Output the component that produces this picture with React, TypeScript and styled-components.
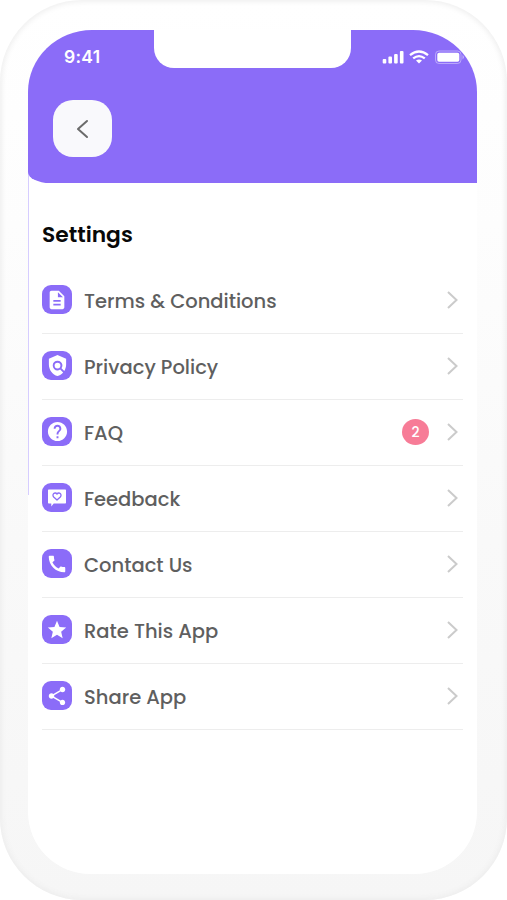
import React from "react";
import styled, { createGlobalStyle } from "styled-components";
import { MdCall, MdDescription, MdHelp, MdPolicy, MdShare, MdStar } from "react-icons/md";

const GlobalStyle = createGlobalStyle`
  * { box-sizing: border-box; }
  body { margin: 0; background: #fff; font-family: Poppins, Inter, sans-serif; }
`;

const Phone = styled.div`
  width: 507px;
  height: 900px;
  padding: 30px 30px 26px 28px;
  border-radius: 82px;
  background: linear-gradient(#fff 0%, #fdfdfd 25%, #f9f9f9 60%, #f6f6f6 100%);
  box-shadow: inset 0 0 6px 1px #ebebeb;
`;

const Screen = styled.main`
  position: relative;
  width: 449px;
  height: 844px;
  border-radius: 62px;
  background: #fff;
`;

const EdgeLine = styled.span`
  position: absolute;
  left: 0;
  top: 140px;
  width: 1px;
  height: 325px;
  background: #d6cdff;
`;

const Header = styled.header`
  position: relative;
  height: 153px;
  padding: 0 0 0 25px;
  background: #8b6cf8;
  border-radius: 64px 64px 0 22px / 62px 62px 0 11px;
`;

const Notch = styled.div`
  position: absolute;
  left: 126px;
  top: 0;
  width: 197px;
  height: 38px;
  border-radius: 0 0 20px 20px;
  background: #fff;
`;

const StatusBar = styled.div`
  display: flex;
  justify-content: space-between;
  height: 70px;
  padding: 17px 11px 0 11px;
  color: #fff;
`;

const Time = styled.span`
  font: 600 17.5px/20px Inter, sans-serif;
  letter-spacing: 0.3px;
`;

const StatusIcons = styled.svg`
  width: 84px;
  height: 20px;
`;

const BackButton = styled.button`
  display: flex;
  align-items: center;
  justify-content: center;
  width: 59px;
  height: 57px;
  padding: 0;
  border: 0;
  border-radius: 20px;
  background: #f9f9fc;
`;

const Content = styled.section`
  padding: 38px 14px 0;
`;

const Title = styled.h1`
  margin: 0;
  height: 47px;
  color: #080808;
  font-size: 21.8px;
  font-weight: 600;
  line-height: 27px;
`;

const List = styled.ul`
  margin: 0;
  padding: 0;
  list-style: none;
`;

const Row = styled.li`
  display: flex;
  align-items: center;
  height: 66px;
  padding: 0 5px 2px 0;
  border-bottom: 1px solid #ededed;
`;

const Tile = styled.span`
  display: flex;
  align-items: center;
  justify-content: center;
  width: 30px;
  height: 29px;
  margin-right: 12px;
  border-radius: 9px;
  background: #8b6cf8;
  color: #fff;
`;

const Label = styled.span`
  flex: 1;
  padding-top: 5px;
  color: #5f5f5f;
  font-size: 19.5px;
  font-weight: 500;
  line-height: 28px;
  white-space: nowrap;
`;

const Badge = styled.span`
  width: 27px;
  height: 26px;
  margin-right: 18px;
  border-radius: 50%;
  background: #f77c97;
  color: #fff;
  font-size: 14px;
  font-weight: 500;
  line-height: 26px;
  text-align: center;
`;

const FeedbackIcon = () => (
  <svg width="20" height="20" viewBox="0 0 20 20">
    <path d="M1.7 1.5h16.6a.7.7 0 0 1 .7.7v12.6a.7.7 0 0 1-.7.7H6.7l-2.4 3v-3H1.7a.7.7 0 0 1-.7-.7V2.2a.7.7 0 0 1 .7-.7Z" fill="#fff" />
    <path d="M10 12 6.7 9C4.4 6.4 8 3.4 10 6c2-2.6 5.6.4 3.3 3Z" fill="none" stroke="#8b6cf8" strokeWidth="1.3" strokeLinejoin="round" />
  </svg>
);

const Chevron = () => (
  <svg width="11" height="18" viewBox="0 0 11 18" fill="none" stroke="#cbcbcb" strokeWidth="2">
    <path d="m1 1 8.5 8L1 17" />
  </svg>
);

const items = [
  { label: "Terms & Conditions", icon: <MdDescription size={22} /> },
  { label: "Privacy Policy", icon: <MdPolicy size={23} /> },
  { label: "FAQ", icon: <MdHelp size={23} />, count: 2 },
  { label: "Feedback", icon: <FeedbackIcon /> },
  { label: "Contact Us", icon: <MdCall size={22} /> },
  { label: "Rate This App", icon: <MdStar size={22} /> },
  { label: "Share App", icon: <MdShare size={22} /> },
];

export default function App() {
  return (
    <>
      <GlobalStyle />
      <Phone>
        <Screen>
          <EdgeLine />
          <Header>
            <Notch />
            <StatusBar>
              <Time>9:41</Time>
              <StatusIcons viewBox="0 0 84 20" fill="#fff">
                <rect x="0.7" y="12" width="3.6" height="4.5" rx="1" />
                <rect x="6.4" y="9.5" width="3.6" height="7" rx="1" />
                <rect x="12.1" y="7" width="3.6" height="9.5" rx="1" />
                <rect x="17.9" y="4" width="3.6" height="12.5" rx="1" />
                <g fill="none" stroke="#fff" strokeWidth="2.3">
                  <path d="M28 8.2q9-7.5 18 0M31.2 11.4q5.8-4.6 11.6 0" />
                </g>
                <path d="M34 13.4q3-2 6 0l-3 3Z" />
                <rect x="53.5" y="4" width="25.5" height="12.5" rx="3.5" fill="none" stroke="#fff" opacity=".4" />
                <rect x="55.3" y="5.8" width="22" height="9" rx="1.8" />
                <path d="M80.5 8q3 2.2 0 4.4Z" opacity=".45" />
              </StatusIcons>
            </StatusBar>
            <BackButton aria-label="Back">
              <svg width="13" height="20" viewBox="0 0 13 20" fill="none" stroke="#6b6b6b" strokeWidth="2" strokeLinecap="round" strokeLinejoin="round">
                <path d="M11 2 2 10l9 8" />
              </svg>
            </BackButton>
          </Header>
          <Content>
            <Title>Settings</Title>
            <List>
              {items.map(({ label, icon, count }) => (
                <Row key={label}>
                  <Tile>{icon}</Tile>
                  <Label>{label}</Label>
                  {count && <Badge>{count}</Badge>}
                  <Chevron />
                </Row>
              ))}
            </List>
          </Content>
        </Screen>
      </Phone>
    </>
  );
}
